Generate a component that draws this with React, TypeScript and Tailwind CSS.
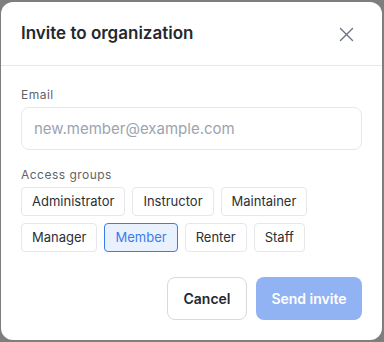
const groups = [
  ["Administrator", "Instructor", "Maintainer"],
  ["Manager", "Member", "Renter", "Staff"],
];

const App = () => {
  const selected = "Member";
  return (
    <div className="h-[342px] w-[384px] bg-[#7d7f7e] pt-[2px] px-[1px] font-['Inter',sans-serif]">
      <div className="h-[338px] w-[381px] rounded-xl bg-white flex flex-col">
        <div className="flex items-center justify-between h-[64px] pl-[20px] pr-[28px] pt-[1px] border-b border-[#e5e7eb]">
          <h2 className="text-[17px] font-semibold text-[#25282d]">Invite to organization</h2>
          <button className="text-[#6b7280]">
            <svg width="15" height="15" viewBox="0 0 15 15" fill="none" stroke="currentColor" strokeWidth="1.4" strokeLinecap="round">
              <path d="M1.5 1.5l12 12M13.5 1.5l-12 12" />
            </svg>
          </button>
        </div>
        <div className="px-[20px] pt-[21px] flex flex-col">
          <label className="text-[12px] text-[#5f6368] tracking-[0.04em] leading-4">Email</label>
          <input
            className="mt-[4px] h-[43px] w-[341px] rounded-lg border border-[#e5e7eb] px-[12px] text-[15px] text-[#1f2937] placeholder:text-[#9ca3af] outline-none"
            placeholder="new.member@example.com"
          />
          <label className="mt-[17px] text-[12px] text-[#5f6368] tracking-[0.04em] leading-4">Access groups</label>
          <div className="mt-[4px] flex flex-col gap-[7px]">
            {groups.map((row, i) => (
              <div key={i} className="flex gap-[7px]">
                {row.map((g) => (
                  <button
                    key={g}
                    className={
                      g === selected
                        ? "h-[29px] px-[10px] rounded border border-[#3b7bea] bg-[#eaf1fe] text-[13px] text-[#3b7bea]"
                        : "h-[29px] px-[10px] rounded border border-[#e5e7eb] bg-white text-[13px] text-[#2b2f36]"
                    }
                  >
                    {g}
                  </button>
                ))}
              </div>
            ))}
          </div>
        </div>
        <div className="mt-[25px] pr-[20px] flex justify-end gap-[9px]">
          <button className="h-[43px] w-[80px] rounded-lg border border-[#d7d9dd] bg-white text-[14px] font-semibold text-[#25282d]">
            Cancel
          </button>
          <button className="h-[43px] w-[106px] rounded-lg bg-[#91b3f4] text-[14px] font-semibold text-white">
            Send invite
          </button>
        </div>
      </div>
    </div>
  );
};

export default App;
